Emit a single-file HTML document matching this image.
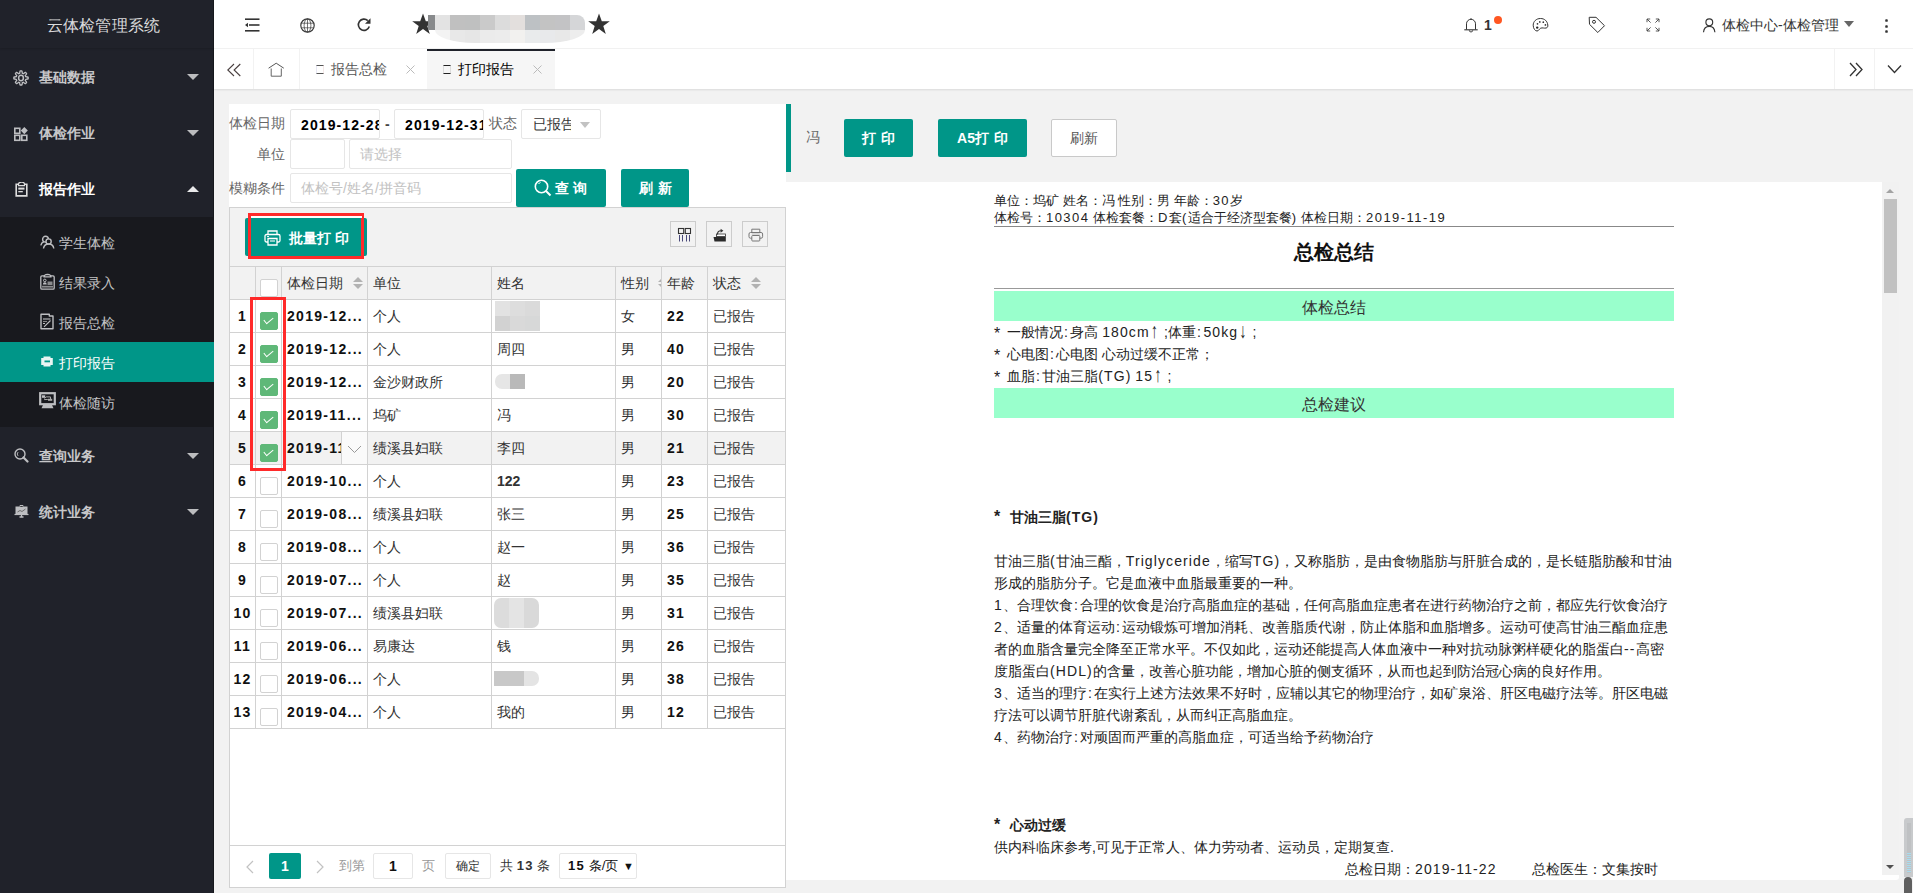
<!DOCTYPE html>
<html><head><meta charset="utf-8">
<style>
*{box-sizing:border-box;margin:0;padding:0}
html,body{width:1913px;height:893px;overflow:hidden}
body{background:#f2f2f2;font-family:"Liberation Sans",sans-serif;font-size:14px;color:#333;position:relative}
.abs{position:absolute}
/* sidebar */
#side{left:0;top:0;width:214px;height:893px;background:#20222a}
#logo{left:0;top:0;width:214px;height:48px;line-height:51px;text-align:center;color:rgba(255,255,255,.85);font-size:16px;padding-right:7px;letter-spacing:0.2px;box-shadow:0 1px 2px rgba(0,0,0,.15)}
.mi{left:0;width:214px;height:56px;color:rgba(255,255,255,.75);font-size:14px}
.mi .t{position:absolute;left:39px;top:1px;line-height:56px;font-weight:bold}
.mi .ic{position:absolute;left:13px;top:20px;width:16px;height:16px}
.mi .ar{position:absolute;left:187px;top:26px;width:0;height:0;border-left:6px solid transparent;border-right:6px solid transparent;border-top:6px solid rgba(255,255,255,.7)}
.mi .ar.up{border-top:0;border-bottom:6px solid rgba(255,255,255,.9)}
#sub{left:0;top:217px;width:214px;height:210px;background:#18191e}
.si{left:0;width:214px;height:40px;color:rgba(255,255,255,.75);font-size:14px}
.si .t{position:absolute;left:59px;top:1px;line-height:40px}
.si .ic{position:absolute;left:40px;top:13px;width:15px;height:15px}
.si.on{background:#009688;color:#fff}
/* header */
#hdr{left:214px;top:0;width:1699px;height:49px;background:#fff;border-bottom:1px solid #f2f2f2}
#tabs{left:214px;top:49px;width:1699px;height:40px;background:#fff;box-shadow:0 1px 2px rgba(0,0,0,.1)}
.tb{position:absolute;top:0;height:40px;border-left:1px solid #f2f2f2}

#lp{left:229px;top:104px;width:557px;height:783px;background:#fff}
.lbl{position:absolute;font-size:14px;color:#666;line-height:18px}
.inp{position:absolute;background:#fff;border:1px solid #e6e6e6;border-radius:2px;overflow:hidden;white-space:nowrap}
.dt{font-weight:bold;color:#000;font-size:14px;line-height:31px;padding-left:10px;letter-spacing:1.1px}
.ph{color:#c2c2c2;font-size:14px;line-height:28px;padding-left:10px}
.btn{position:absolute;background:#009688;color:#fff;border-radius:2px;text-align:center;font-weight:bold;font-size:14px}
#tbl{left:229px;top:207px;width:557px;height:681px;border:1px solid #d2d2d2;background:#fff}
#tool{left:0;top:0;width:555px;height:59px;background:#f2f2f2;border-bottom:1px solid #d2d2d2}
.ibtn{position:absolute;top:13px;width:26px;height:26px;border:1px solid #ccc}
.tr{position:absolute;left:0;width:555px;height:33px;border-bottom:1px solid #d2d2d2}
.tr.h{background:#f2f2f2}
.td{position:absolute;top:0;height:32px;line-height:32px;white-space:nowrap;overflow:hidden;border-right:1px solid #d2d2d2;padding-left:5px;font-size:14px;color:#333}
.tr .td.b{font-weight:bold;color:#111;letter-spacing:1.3px}
.cb{position:absolute;left:30px;width:18px;height:18px;border:1px solid #d2d2d2;border-radius:2px;background:#fff}
.cb.on{background:#5fb878;border-color:#5fb878}
.cb.on:after{content:"";position:absolute;left:3px;top:3.5px;width:8px;height:4px;border-left:1.5px solid #fff;border-bottom:1.5px solid #fff;transform:rotate(-40deg)}
.wb{letter-spacing:1.3px}
.blur{position:absolute;display:flex;flex-wrap:wrap}
.blur i{display:block;width:15px;height:15px}

#rp{left:786px;top:182px;width:1096px;height:698px;background:#fff;overflow:hidden}
.rep{position:absolute;left:208px;width:680px;font-size:14px;color:#222}
.ln{position:absolute;left:0;white-space:nowrap;line-height:22px}
.gb{position:absolute;left:0;width:680px;height:30px;background:#99ffcc;text-align:center;line-height:33px;font-size:16px;color:#333}
.lt{letter-spacing:1.1px}
.h2 .lt{letter-spacing:1.45px}
.ast{display:inline-block;width:9px;font-size:16px;vertical-align:top;position:relative;top:2px}
.co{letter-spacing:2.5px;padding-left:1px}
.ar2{display:inline-block;transform:scaleY(1.5);transform-origin:50% 60%}
</style></head><body>

<div id="side" class="abs">
  <div class="abs" style="left:213px;top:0;width:1px;height:893px;background:#16181d"></div>
  <div id="logo" class="abs">云体检管理系统</div>
  <div class="mi abs" style="top:48px"><svg class="abs" style="left:13px;top:22px" width="16" height="16" viewBox="0 0 16 16"><path d="M8.00 0.85 L8.28 0.86 L8.56 0.87 L8.84 0.90 L9.03 1.48 L9.17 2.12 L9.26 2.75 L9.32 3.33 L9.50 3.39 L9.68 3.45 L9.86 3.52 L10.03 3.60 L10.20 3.68 L10.37 3.77 L10.82 3.40 L11.33 3.01 L11.88 2.66 L12.43 2.39 L12.64 2.56 L12.85 2.75 L13.06 2.94 L13.25 3.15 L13.44 3.36 L13.61 3.57 L13.34 4.12 L12.99 4.67 L12.60 5.18 L12.23 5.63 L12.32 5.80 L12.40 5.97 L12.48 6.14 L12.55 6.32 L12.61 6.50 L12.67 6.68 L13.25 6.74 L13.88 6.83 L14.52 6.97 L15.10 7.16 L15.13 7.44 L15.14 7.72 L15.15 8.00 L15.14 8.28 L15.13 8.56 L15.10 8.84 L14.52 9.03 L13.88 9.17 L13.25 9.26 L12.67 9.32 L12.61 9.50 L12.55 9.68 L12.48 9.86 L12.40 10.03 L12.32 10.20 L12.23 10.37 L12.60 10.82 L12.99 11.33 L13.34 11.88 L13.61 12.43 L13.44 12.64 L13.25 12.85 L13.06 13.06 L12.85 13.25 L12.64 13.44 L12.43 13.61 L11.88 13.34 L11.33 12.99 L10.82 12.60 L10.37 12.23 L10.20 12.32 L10.03 12.40 L9.86 12.48 L9.68 12.55 L9.50 12.61 L9.32 12.67 L9.26 13.25 L9.17 13.88 L9.03 14.52 L8.84 15.10 L8.56 15.13 L8.28 15.14 L8.00 15.15 L7.72 15.14 L7.44 15.13 L7.16 15.10 L6.97 14.52 L6.83 13.88 L6.74 13.25 L6.68 12.67 L6.50 12.61 L6.32 12.55 L6.14 12.48 L5.97 12.40 L5.80 12.32 L5.63 12.23 L5.18 12.60 L4.67 12.99 L4.12 13.34 L3.57 13.61 L3.36 13.44 L3.15 13.25 L2.94 13.06 L2.75 12.85 L2.56 12.64 L2.39 12.43 L2.66 11.88 L3.01 11.33 L3.40 10.82 L3.77 10.37 L3.68 10.20 L3.60 10.03 L3.52 9.86 L3.45 9.68 L3.39 9.50 L3.33 9.32 L2.75 9.26 L2.12 9.17 L1.48 9.03 L0.90 8.84 L0.87 8.56 L0.86 8.28 L0.85 8.00 L0.86 7.72 L0.87 7.44 L0.90 7.16 L1.48 6.97 L2.12 6.83 L2.75 6.74 L3.33 6.68 L3.39 6.50 L3.45 6.32 L3.52 6.14 L3.60 5.97 L3.68 5.80 L3.77 5.63 L3.40 5.18 L3.01 4.67 L2.66 4.12 L2.39 3.57 L2.56 3.36 L2.75 3.15 L2.94 2.94 L3.15 2.75 L3.36 2.56 L3.57 2.39 L4.12 2.66 L4.67 3.01 L5.18 3.40 L5.63 3.77 L5.80 3.68 L5.97 3.60 L6.14 3.52 L6.32 3.45 L6.50 3.39 L6.68 3.33 L6.74 2.75 L6.83 2.12 L6.97 1.48 L7.16 0.90 L7.44 0.87 L7.72 0.86Z" fill="none" stroke="#bdbec1" stroke-width="1.35" stroke-linejoin="round"/><ellipse cx="8" cy="8" rx="2.4" ry="2.7" fill="none" stroke="#bdbec1" stroke-width="1.5"/></svg><span class="t">基础数据</span><span class="ar"></span></div>
  <div class="mi abs" style="top:104px"><svg class="abs" style="left:14px;top:23px" width="15" height="15" viewBox="0 0 15 15"><g fill="none" stroke="#bdbec1" stroke-width="1.6"><rect x="0.8" y="1.3" width="5" height="5"/><rect x="0.8" y="8.3" width="5" height="5"/><rect x="7.8" y="8.3" width="5" height="5"/></g><path d="M10.3 0L13.8 3.6L10.3 7.2L6.8 3.6Z" fill="#bdbec1"/></svg><span class="t">体检作业</span><span class="ar"></span></div>
  <div class="mi abs" style="top:160px;color:#fff"><svg class="abs" style="left:15px;top:22px" width="13" height="15" viewBox="0 0 13 15"><path d="M3.5 2.2H1.2V13.9H11.8V2.2H9.5" fill="none" stroke="#ddd" stroke-width="1.6"/><path d="M3.5 3.6V2.2A3 2 0 0 1 9.5 2.2V3.6Z" fill="none" stroke="#ddd" stroke-width="1.2"/><rect x="3.3" y="5.6" width="6.2" height="2" fill="#ddd"/><rect x="3.3" y="9" width="4.5" height="1.3" fill="#ddd"/></svg><span class="t">报告作业</span><span class="ar up"></span></div>
  <div id="sub" class="abs">
    <div class="si abs" style="top:5px"><svg class="abs" style="left:40px;top:13px" width="15" height="15" viewBox="0 0 15 15"><g fill="none" stroke="#bdbec1" stroke-width="1.4"><circle cx="5.5" cy="4.2" r="2.9"/><path d="M0.8 10.3A4.8 4.8 0 0 1 4 6.7"/><circle cx="8.6" cy="6.5" r="2.6" fill="#18191e"/><path d="M3.5 13.5A5.2 5.2 0 0 1 13.8 13.5"/></g></svg><span class="t">学生体检</span></div>
    <div class="si abs" style="top:45px"><svg class="abs" style="left:40px;top:11px" width="15" height="17" viewBox="0 0 15 17"><path d="M4 2.8H2A1.3 1.3 0 0 0 0.8 4.1V14.9A1.3 1.3 0 0 0 2 16.2H13A1.3 1.3 0 0 0 14.2 14.9V4.1A1.3 1.3 0 0 0 13 2.8H11" fill="none" stroke="#bdbec1" stroke-width="1.3"/><path d="M4 3.8Q4 1.8 7.5 1.4Q11 1.8 11 3.8Z" fill="none" stroke="#bdbec1" stroke-width="1.2"/><circle cx="4.8" cy="7.4" r="1.3" fill="none" stroke="#bdbec1" stroke-width="1"/><path d="M2.8 11.5A2 2.2 0 0 1 6.8 11.5Z" fill="#bdbec1"/><rect x="7.5" y="8.5" width="5" height="3.5" fill="#8a8b8e"/><rect x="2" y="12.8" width="11" height="1.8" fill="#8a8b8e"/></svg><span class="t">结果录入</span></div>
    <div class="si abs" style="top:85px"><svg class="abs" style="left:40px;top:11px" width="14" height="17" viewBox="0 0 14 17"><path d="M1 1.2H9.3V3H13V15.8H1Z" fill="none" stroke="#bdbec1" stroke-width="1.4" stroke-linejoin="round"/><path d="M3 6H10.5" stroke="#bdbec1" stroke-width="1.1"/><path d="M3 8.5H7" stroke="#888" stroke-width="1.1"/><path d="M3 10.5H5" stroke="#bdbec1" stroke-width="1"/><path d="M4 13.8L10.5 7.5" stroke="#bdbec1" stroke-width="1.1"/></svg><span class="t">报告总检</span></div>
    <div class="si abs on" style="top:125px"><svg class="abs" style="left:41px;top:14px" width="12" height="11" viewBox="0 0 12 11"><path d="M2.5 0.5H9.5V2H11.8V9H9.5V10.5H2.5V9H0.2V2H2.5Z" fill="#e8f5f3"/><rect x="3.5" y="4.5" width="5.5" height="1.8" fill="#009688"/></svg><span class="t">打印报告</span></div>
    <div class="si abs" style="top:165px"><svg class="abs" style="left:39px;top:10px" width="17" height="17" viewBox="0 0 17 17"><rect x="1.2" y="1.2" width="14.6" height="11" fill="none" stroke="#bdbec1" stroke-width="2.2"/><path d="M4 13H13L14.5 16.2H2.5Z" fill="#bdbec1"/><rect x="3" y="3.3" width="3.2" height="2.5" fill="#bdbec1"/><path d="M5.5 6.5L7.2 4.9H11.5V7.5H8.5L5.2 7.6" fill="none" stroke="#aaa" stroke-width="1"/><rect x="9" y="6.8" width="4.2" height="2" fill="#aaa"/></svg><span class="t">体检随访</span></div>
  </div>
  <div class="mi abs" style="top:427px"><svg class="abs" style="left:14px;top:21px" width="15" height="15" viewBox="0 0 15 15"><circle cx="6" cy="6" r="5" fill="none" stroke="#bdbec1" stroke-width="1.4"/><path d="M9.5 9.5L13.5 13.5" stroke="#bdbec1" stroke-width="2.2" stroke-linecap="round"/><path d="M4.3 4A2.5 2.5 0 0 0 4.3 8" fill="none" stroke="#bdbec1" stroke-width="0.9"/></svg><span class="t">查询业务</span><span class="ar"></span></div>
  <div class="mi abs" style="top:483px"><svg class="abs" style="left:14px;top:22px" width="15" height="13" viewBox="0 0 15 13"><path d="M1.5 1.5H13.5V9.5H1.5Z" fill="#bdbec1"/><path d="M0.5 9.5H14.5" stroke="#bdbec1" stroke-width="1.2"/><path d="M6 1.5V0.5H9V1.5" stroke="#bdbec1" stroke-width="1"/><path d="M7.5 10V11.5M5.5 12H9.5" stroke="#bdbec1" stroke-width="1.3"/><path d="M3.5 7L6 5.5L8 6.5L11.5 4" fill="none" stroke="#555" stroke-width="0.8"/></svg><span class="t">统计业务</span><span class="ar"></span></div>
</div>

<div id="hdr" class="abs">
  <!-- menu icon -->
  <svg class="abs" style="left:30px;top:18px" width="16" height="14" viewBox="0 0 16 14"><g stroke="#333" stroke-width="1.6"><path d="M1 1.2H15.5"/><path d="M5 7H15.5"/><path d="M1 12.8H15.5"/></g><path d="M1 7L4 4.8V9.2Z" fill="#333"/></svg>
  <!-- globe -->
  <svg class="abs" style="left:86px;top:18px" width="15" height="15" viewBox="0 0 15 15"><g fill="none" stroke="#3a3a3a"><circle cx="7.5" cy="7.5" r="6.7" stroke-width="1.2"/><ellipse cx="7.5" cy="7.5" rx="3.4" ry="6.6" stroke-width="0.7"/><path d="M7.5 1V14M1.5 5.2H13.5M1.5 9.8H13.5" stroke-width="0.7"/></g></svg>
  <!-- refresh -->
  <svg class="abs" style="left:142px;top:17px" width="16" height="16" viewBox="0 0 16 16"><path d="M13.3 9.5A5.6 5.6 0 1 1 11.8 3.6" fill="none" stroke="#333" stroke-width="1.6"/><path d="M14.5 1.2V6.8H9Z" fill="#333"/></svg>
  <!-- stars & blurred title -->
  <svg class="abs" style="left:198px;top:13px" width="24" height="23" viewBox="0 0 24 23"><path d="M11 0.5L13.8 8.2H21.8L15.3 13L17.8 21L11 16.1L4.2 21L6.7 13L0.2 8.2H8.2Z" fill="#333"/></svg>
  <div class="abs" style="left:214px;top:15px;width:157px;height:15px;border-radius:0 8px 0 0;overflow:hidden;display:flex">
    <div style="width:7px;background:#888a8c"></div><div style="width:15px;background:#e3e3e3"></div><div style="width:15px;background:#c0c0c0"></div><div style="width:15px;background:#bfc0c0"></div><div style="width:15px;background:#cacaca"></div><div style="width:15px;background:#dcdcdc"></div><div style="width:15px;background:#e3dfdd"></div><div style="width:15px;background:#bdc1c4"></div><div style="width:15px;background:#c3c3c3"></div><div style="width:15px;background:#c3c3c5"></div><div style="width:15px;background:#d5d6d8"></div>
  </div>
  <div class="abs" style="left:221px;top:30px;width:150px;height:13px;border-radius:0 0 40px 40px/0 0 13px 13px;overflow:hidden;display:flex">
    <div style="width:15px;background:#f3f3f3"></div><div style="width:15px;background:#e8e8e8"></div><div style="width:15px;background:#e6e6e6"></div><div style="width:15px;background:#ebebeb"></div><div style="width:15px;background:#ececec"></div><div style="width:15px;background:#f2f1ef"></div><div style="width:15px;background:#e9ebec"></div><div style="width:15px;background:#e8e9eb"></div><div style="width:15px;background:#e8e8e8"></div><div style="width:15px;background:#ededed"></div>
  </div>
  <svg class="abs" style="left:374px;top:13px" width="24" height="23" viewBox="0 0 24 23"><path d="M11 0.5L13.8 8.2H21.8L15.3 13L17.8 21L11 16.1L4.2 21L6.7 13L0.2 8.2H8.2Z" fill="#333"/></svg>
  <!-- right icons -->
  <svg class="abs" style="left:1250px;top:17px" width="15" height="16" viewBox="0 0 15 16"><path d="M2.5 12.5V6.8A4.5 4.5 0 0 1 11.5 6.8V12.5" fill="none" stroke="#333" stroke-width="1"/><path d="M0.3 12.8H13.7" stroke="#333" stroke-width="1.1"/><path d="M5.3 13.3A1.7 1.7 0 0 0 8.7 13.3" fill="none" stroke="#333" stroke-width="0.9"/><path d="M7 1.2V2.4" stroke="#333" stroke-width="1"/></svg>
  <div class="abs" style="left:1270px;top:16px;font-weight:bold;font-size:14px;line-height:18px;color:#333">1</div>
  <div class="abs" style="left:1280px;top:16px;width:8px;height:8px;border-radius:50%;background:#ff5722"></div>
  <svg class="abs" style="left:1318px;top:17px" width="17" height="16" viewBox="0 0 17 16"><path d="M8.5 1.5C4.2 1.5 1.2 4.5 1.2 8.2C1.2 11.8 3.3 14 5 14C6.8 14 7 12 8.7 11.2C10.5 10.4 12 11.5 14.2 11C15.6 10.6 16 9.6 15.8 8C15.3 4 12.5 1.5 8.5 1.5Z" fill="none" stroke="#333" stroke-width="1"/><circle cx="5.2" cy="10.6" r="1.2" fill="#222"/><circle cx="5.5" cy="6.8" r="0.85" fill="#333"/><circle cx="7.8" cy="4.9" r="0.85" fill="#333"/><circle cx="11.3" cy="5.2" r="0.85" fill="#333"/><circle cx="13.4" cy="7.9" r="0.85" fill="#333"/></svg>
  <svg class="abs" style="left:1374px;top:16px" width="18" height="18" viewBox="0 0 18 18"><path d="M1.2 1.3H8L16.5 9.7L9.8 16.5L1.5 8.3Z" fill="none" stroke="#333" stroke-width="1" stroke-linejoin="round"/><circle cx="6" cy="5.8" r="1.5" fill="none" stroke="#333" stroke-width="1"/></svg>
  <svg class="abs" style="left:1432px;top:18px" width="14" height="14" viewBox="0 0 14 14"><g stroke="#444" stroke-width="0.9" fill="none"><path d="M1 4.2V1H4.2M1 1L4.6 4.6"/><path d="M9.8 1H13V4.2M13 1L9.4 4.6"/><path d="M1 9.8V13H4.2M1 13L4.6 9.4"/><path d="M13 9.8V13H9.8M13 13L9.4 9.4"/></g></svg>
  <svg class="abs" style="left:1488px;top:18px" width="14" height="15" viewBox="0 0 14 15"><circle cx="7.3" cy="4.3" r="3.4" fill="none" stroke="#333" stroke-width="1.15"/><path d="M1.5 14.2C1.9 10.4 4 8.4 7.3 8.4S12.5 10.4 12.9 14.2" fill="none" stroke="#333" stroke-width="1.15"/></svg>
  <div class="abs" style="left:1508px;top:16px;line-height:18px;font-size:14px;color:#333">体检中心-体检管理</div>
  <div class="abs" style="left:1630px;top:21px;width:0;height:0;border-left:5.5px solid transparent;border-right:5.5px solid transparent;border-top:6px solid #666"></div>
  <div class="abs" style="left:1671px;top:19px;width:3px">
    <div style="width:3px;height:3px;background:#333;border-radius:1px;margin-bottom:2.5px;transform:scale(.85)"></div>
    <div style="width:3px;height:3px;background:#333;border-radius:1px;margin-bottom:2.5px;transform:scale(.85)"></div>
    <div style="width:3px;height:3px;background:#333;border-radius:1px;transform:scale(.85)"></div>
  </div>
</div>
<div id="tabs" class="abs">
  <div class="tb" style="left:0;width:40px;border-left:0;border-right:1px solid #f2f2f2">
    <svg class="abs" style="left:12.5px;top:14px" width="15" height="15" viewBox="0 0 15 15"><path d="M7 1L0.8 7L7 13M13.3 1L7.1 7L13.3 13" fill="none" stroke="#4a4040" stroke-width="1.1"/></svg>
  </div>
  <div class="tb" style="left:40px;width:46px;border-left:0;border-right:1px solid #f2f2f2">
    <svg class="abs" style="left:14px;top:13px" width="18" height="16" viewBox="0 0 18 16"><path d="M0.6 6.2L8.2 1.2L15.8 6.2" fill="none" stroke="#555" stroke-width="1"/><path d="M3.2 6.5V14.2H13.3V6.5" fill="none" stroke="#666" stroke-width="1"/></svg>
  </div>
  <div class="tb" style="left:86px;width:127px;border-left:0">
    <div class="abs" style="left:16px;top:16px;width:8px;height:9px;border-top:1px solid #555;border-bottom:1px solid #555;border-left:1px solid #e8e8f4;border-right:1px solid #f4e8e8"></div>
    <div class="abs" style="left:31px;top:0;line-height:40px;color:#555">报告总检</div>
    <svg class="abs" style="left:106px;top:16px" width="9" height="9" viewBox="0 0 9 9"><path d="M0.5 0.5L8.5 8.5M8.5 0.5L0.5 8.5" stroke="#bbb" stroke-width="1"/></svg>
  </div>
  <div class="tb" style="left:213px;width:128px;border-left:0;background:#f6f6f6">
    <div class="abs" style="left:0;top:0;width:128px;height:2px;background:#1f222a"></div>
    <div class="abs" style="left:16px;top:16px;width:8px;height:9px;border-top:1px solid #222;border-bottom:1px solid #222;border-left:1px solid #ddd;border-right:1px solid #ddd"></div>
    <div class="abs" style="left:31px;top:0;line-height:40px;color:#000">打印报告</div>
    <svg class="abs" style="left:106px;top:16px" width="9" height="9" viewBox="0 0 9 9"><path d="M0.5 0.5L8.5 8.5M8.5 0.5L0.5 8.5" stroke="#bbb" stroke-width="1"/></svg>
  </div>
  <div class="tb" style="left:1620px;width:40px;border-left:1px solid #f2f2f2">
    <svg class="abs" style="left:13px;top:13px" width="15" height="15" viewBox="0 0 15 15"><path d="M2 1L8 7.5L2 14M8 1L14 7.5L8 14" fill="none" stroke="#333" stroke-width="1.3"/></svg>
  </div>
  <div class="tb" style="left:1660px;width:39px;border-left:1px solid #f2f2f2">
    <svg class="abs" style="left:12px;top:15px" width="15" height="10" viewBox="0 0 15 10"><path d="M1 1.5L7.5 8.5L14 1.5" fill="none" stroke="#333" stroke-width="1.3"/></svg>
  </div>
</div>

<div id="lp" class="abs">
  <div class="lbl" style="left:0;top:10px">体检日期</div>
  <div class="inp" style="left:61px;top:5px;width:90px;height:30px"><div class="dt">2019-12-28</div></div>
  <div class="lbl" style="left:156px;top:11px;color:#444;font-weight:bold">-</div>
  <div class="inp" style="left:165px;top:5px;width:90px;height:30px"><div class="dt">2019-12-31</div></div>
  <div class="lbl" style="left:260px;top:10px">状态</div>
  <div class="inp" style="left:292px;top:5px;width:80px;height:30px"><div class="abs" style="left:11px;top:0;width:38px;overflow:hidden;line-height:29px;color:#333">已报告</div>
    <div class="abs" style="left:58px;top:12px;width:0;height:0;border-left:5.5px solid transparent;border-right:5.5px solid transparent;border-top:6px solid #c2c2c2"></div></div>
  <div class="lbl" style="left:28px;top:41px">单位</div>
  <div class="inp" style="left:61px;top:35px;width:55px;height:30px"></div>
  <div class="inp" style="left:120px;top:35px;width:163px;height:30px"><div class="ph">请选择</div></div>
  <div class="lbl" style="left:0;top:75px">模糊条件</div>
  <div class="inp" style="left:61px;top:69px;width:222px;height:30px"><div class="ph">体检号/姓名/拼音码</div></div>
  <div class="btn" style="left:287px;top:65px;width:90px;height:38px;line-height:38px">
    <svg class="abs" style="left:18px;top:10px" width="18" height="18" viewBox="0 0 18 18"><circle cx="7.5" cy="7.5" r="6.2" fill="none" stroke="#fff" stroke-width="1.6"/><path d="M12 12L16.5 16.5" stroke="#fff" stroke-width="2"/><path d="M4.5 5A3.5 3.5 0 0 1 6.5 3.5" fill="none" stroke="#fff" stroke-width="1"/></svg>
    <span class="abs" style="left:39px;top:0;letter-spacing:4px">查询</span></div>
  <div class="btn" style="left:392px;top:65px;width:68px;height:38px;line-height:38px;letter-spacing:5px;padding-left:5px">刷新</div>
</div>
<div id="tbl" class="abs">
  <div id="tool" class="abs">
    <div class="btn" style="left:15px;top:10px;width:122px;height:38px;line-height:38px">
      <svg class="abs" style="left:19px;top:12px" width="17" height="16" viewBox="0 0 17 16"><path d="M4 4.5V1H13V4.5" fill="none" stroke="#fff" stroke-width="1.3"/><path d="M4 12H2.5A1.5 1.5 0 0 1 1 10.5V6A1.5 1.5 0 0 1 2.5 4.5H14.5A1.5 1.5 0 0 1 16 6V10.5A1.5 1.5 0 0 1 14.5 12H13" fill="none" stroke="#fff" stroke-width="1.3"/><path d="M4 8.5H13V15H4Z" fill="none" stroke="#fff" stroke-width="1.3"/><path d="M6 11H11" stroke="#fff" stroke-width="1.1"/><path d="M3 6.5H5" stroke="#fff" stroke-width="0.9"/></svg>
      <span class="abs" style="left:44px;top:1px">批量打 印</span>
    </div>
    <div class="abs" style="left:18px;top:5px;width:116px;height:46px;border:3px solid #ff2a2a"></div>
    <div class="abs" style="left:21px;top:8px;width:111px;height:2px;background:#fff"></div>
    <div class="ibtn" style="left:440px">
      <svg class="abs" style="left:6px;top:5px" width="15" height="16" viewBox="0 0 15 16"><g fill="none" stroke="#333" stroke-width="1.1"><rect x="1.5" y="1.5" width="5.2" height="5"/><rect x="8.3" y="1.5" width="5.2" height="5"/></g><g stroke="#4a4a7a" stroke-width="1"><path d="M2.5 8V14.5M5.5 8V14.5M9.5 8V14.5M12.5 8V14.5"/></g></svg></div>
    <div class="ibtn" style="left:476px">
      <svg class="abs" style="left:6px;top:6px" width="14" height="15" viewBox="0 0 14 15"><path d="M3 8.2H12.5V7.5" fill="none" stroke="#333" stroke-width="1"/><rect x="3.5" y="6" width="9" height="2.5" fill="#fff" stroke="#333" stroke-width="0.8"/><path d="M0.5 9H12.8V13.6H1.5Z" fill="#2a2a2a"/><path d="M4.5 6.5C4.5 4 5.5 2.8 8 2.8" fill="none" stroke="#333" stroke-width="1.1"/><path d="M7.6 0.8L10.4 2.8L7.6 4.8Z" fill="#333"/></svg></div>
    <div class="ibtn" style="left:512px">
      <svg class="abs" style="left:5px;top:5px" width="16" height="16" viewBox="0 0 16 16"><g fill="none" stroke="#777" stroke-width="1"><path d="M3.8 5.5V2.2H11.8V5.5"/><path d="M3.8 11.2H2.5A1.5 1.5 0 0 1 1 9.7V7A1.5 1.5 0 0 1 2.5 5.5H13.1A1.5 1.5 0 0 1 14.6 7V9.7A1.5 1.5 0 0 1 13.1 11.2H11.8"/><rect x="3.8" y="8.5" width="8" height="5.5" rx="0.8"/></g><path d="M3.8 7H11.8" stroke="#bbb" stroke-width="1"/></svg></div>
  </div>
  <div class="tr h" style="top:59px">
    <div class="td" style="left:0;width:26px"></div>
    <div class="td" style="left:26px;width:26px;padding:0"><div class="cb" style="left:4px;top:12px"></div></div>
    <div class="td" style="left:52px;width:86px">体检日期<span class="abs" style="left:71px;top:10px;width:0;height:0;border:5px solid transparent;border-bottom-color:#b2b2b2;border-top:0"></span><span class="abs" style="left:71px;top:17px;width:0;height:0;border:5px solid transparent;border-top-color:#b2b2b2;border-bottom:0"></span></div>
    <div class="td" style="left:138px;width:124px">单位</div>
    <div class="td" style="left:262px;width:124px">姓名</div>
    <div class="td" style="left:386px;width:46px">性别<span class="abs" style="left:42px;top:10px;width:0;height:0;border:5px solid transparent;border-bottom-color:#b2b2b2;border-top:0"></span><span class="abs" style="left:42px;top:17px;width:0;height:0;border:5px solid transparent;border-top-color:#b2b2b2;border-bottom:0"></span></div>
    <div class="td" style="left:432px;width:46px">年龄</div>
    <div class="td" style="left:478px;width:77px;border-right:0">状态<span class="abs" style="left:43px;top:10px;width:0;height:0;border:5px solid transparent;border-bottom-color:#b2b2b2;border-top:0"></span><span class="abs" style="left:43px;top:17px;width:0;height:0;border:5px solid transparent;border-top-color:#b2b2b2;border-bottom:0"></span></div>
  </div>
<div class="tr" style="top:92px;"><div class="td b" style="left:0;width:26px;padding:0;text-align:center">1</div><div class="td" style="left:26px;width:26px;padding:0"><div class="cb on" style="left:4px;top:12px"></div></div><div class="td b" style="left:52px;width:86px">2019-12...</div><div class="td" style="left:138px;width:124px">个人</div><div class="td" style="left:262px;width:124px"></div><div class="td" style="left:386px;width:46px">女</div><div class="td b" style="left:432px;width:46px">22</div><div class="td" style="left:478px;width:77px;border-right:0">已报告</div></div>
<div class="tr" style="top:125px;"><div class="td b" style="left:0;width:26px;padding:0;text-align:center">2</div><div class="td" style="left:26px;width:26px;padding:0"><div class="cb on" style="left:4px;top:12px"></div></div><div class="td b" style="left:52px;width:86px">2019-12...</div><div class="td" style="left:138px;width:124px">个人</div><div class="td" style="left:262px;width:124px">周四</div><div class="td" style="left:386px;width:46px">男</div><div class="td b" style="left:432px;width:46px">40</div><div class="td" style="left:478px;width:77px;border-right:0">已报告</div></div>
<div class="tr" style="top:158px;"><div class="td b" style="left:0;width:26px;padding:0;text-align:center">3</div><div class="td" style="left:26px;width:26px;padding:0"><div class="cb on" style="left:4px;top:12px"></div></div><div class="td b" style="left:52px;width:86px">2019-12...</div><div class="td" style="left:138px;width:124px">金沙财政所</div><div class="td" style="left:262px;width:124px"></div><div class="td" style="left:386px;width:46px">男</div><div class="td b" style="left:432px;width:46px">20</div><div class="td" style="left:478px;width:77px;border-right:0">已报告</div></div>
<div class="tr" style="top:191px;"><div class="td b" style="left:0;width:26px;padding:0;text-align:center">4</div><div class="td" style="left:26px;width:26px;padding:0"><div class="cb on" style="left:4px;top:12px"></div></div><div class="td b" style="left:52px;width:86px">2019-11...</div><div class="td" style="left:138px;width:124px">坞矿</div><div class="td" style="left:262px;width:124px">冯</div><div class="td" style="left:386px;width:46px">男</div><div class="td b" style="left:432px;width:46px">30</div><div class="td" style="left:478px;width:77px;border-right:0">已报告</div></div>
<div class="tr" style="top:224px;background:#f2f2f2;"><div class="td b" style="left:0;width:26px;padding:0;text-align:center">5</div><div class="td" style="left:26px;width:26px;padding:0"><div class="cb on" style="left:4px;top:12px"></div></div><div class="td b" style="left:52px;width:86px">2019-11</div><div class="td" style="left:138px;width:124px">绩溪县妇联</div><div class="td" style="left:262px;width:124px">李四</div><div class="td" style="left:386px;width:46px">男</div><div class="td b" style="left:432px;width:46px">21</div><div class="td" style="left:478px;width:77px;border-right:0">已报告</div></div>
<div class="tr" style="top:257px;"><div class="td b" style="left:0;width:26px;padding:0;text-align:center">6</div><div class="td" style="left:26px;width:26px;padding:0"><div class="cb" style="left:4px;top:12px"></div></div><div class="td b" style="left:52px;width:86px">2019-10...</div><div class="td" style="left:138px;width:124px">个人</div><div class="td" style="left:262px;width:124px"><b>122</b></div><div class="td" style="left:386px;width:46px">男</div><div class="td b" style="left:432px;width:46px">23</div><div class="td" style="left:478px;width:77px;border-right:0">已报告</div></div>
<div class="tr" style="top:290px;"><div class="td b" style="left:0;width:26px;padding:0;text-align:center">7</div><div class="td" style="left:26px;width:26px;padding:0"><div class="cb" style="left:4px;top:12px"></div></div><div class="td b" style="left:52px;width:86px">2019-08...</div><div class="td" style="left:138px;width:124px">绩溪县妇联</div><div class="td" style="left:262px;width:124px">张三</div><div class="td" style="left:386px;width:46px">男</div><div class="td b" style="left:432px;width:46px">25</div><div class="td" style="left:478px;width:77px;border-right:0">已报告</div></div>
<div class="tr" style="top:323px;"><div class="td b" style="left:0;width:26px;padding:0;text-align:center">8</div><div class="td" style="left:26px;width:26px;padding:0"><div class="cb" style="left:4px;top:12px"></div></div><div class="td b" style="left:52px;width:86px">2019-08...</div><div class="td" style="left:138px;width:124px">个人</div><div class="td" style="left:262px;width:124px">赵一</div><div class="td" style="left:386px;width:46px">男</div><div class="td b" style="left:432px;width:46px">36</div><div class="td" style="left:478px;width:77px;border-right:0">已报告</div></div>
<div class="tr" style="top:356px;"><div class="td b" style="left:0;width:26px;padding:0;text-align:center">9</div><div class="td" style="left:26px;width:26px;padding:0"><div class="cb" style="left:4px;top:12px"></div></div><div class="td b" style="left:52px;width:86px">2019-07...</div><div class="td" style="left:138px;width:124px">个人</div><div class="td" style="left:262px;width:124px">赵</div><div class="td" style="left:386px;width:46px">男</div><div class="td b" style="left:432px;width:46px">35</div><div class="td" style="left:478px;width:77px;border-right:0">已报告</div></div>
<div class="tr" style="top:389px;"><div class="td b" style="left:0;width:26px;padding:0;text-align:center">10</div><div class="td" style="left:26px;width:26px;padding:0"><div class="cb" style="left:4px;top:12px"></div></div><div class="td b" style="left:52px;width:86px">2019-07...</div><div class="td" style="left:138px;width:124px">绩溪县妇联</div><div class="td" style="left:262px;width:124px"></div><div class="td" style="left:386px;width:46px">男</div><div class="td b" style="left:432px;width:46px">31</div><div class="td" style="left:478px;width:77px;border-right:0">已报告</div></div>
<div class="tr" style="top:422px;"><div class="td b" style="left:0;width:26px;padding:0;text-align:center">11</div><div class="td" style="left:26px;width:26px;padding:0"><div class="cb" style="left:4px;top:12px"></div></div><div class="td b" style="left:52px;width:86px">2019-06...</div><div class="td" style="left:138px;width:124px">易康达</div><div class="td" style="left:262px;width:124px">钱</div><div class="td" style="left:386px;width:46px">男</div><div class="td b" style="left:432px;width:46px">26</div><div class="td" style="left:478px;width:77px;border-right:0">已报告</div></div>
<div class="tr" style="top:455px;"><div class="td b" style="left:0;width:26px;padding:0;text-align:center">12</div><div class="td" style="left:26px;width:26px;padding:0"><div class="cb" style="left:4px;top:12px"></div></div><div class="td b" style="left:52px;width:86px">2019-06...</div><div class="td" style="left:138px;width:124px">个人</div><div class="td" style="left:262px;width:124px"></div><div class="td" style="left:386px;width:46px">男</div><div class="td b" style="left:432px;width:46px">38</div><div class="td" style="left:478px;width:77px;border-right:0">已报告</div></div>
<div class="tr" style="top:488px;"><div class="td b" style="left:0;width:26px;padding:0;text-align:center">13</div><div class="td" style="left:26px;width:26px;padding:0"><div class="cb" style="left:4px;top:12px"></div></div><div class="td b" style="left:52px;width:86px">2019-04...</div><div class="td" style="left:138px;width:124px">个人</div><div class="td" style="left:262px;width:124px">我的</div><div class="td" style="left:386px;width:46px">男</div><div class="td b" style="left:432px;width:46px">12</div><div class="td" style="left:478px;width:77px;border-right:0">已报告</div></div>

  <!-- red box around checkboxes -->
  <div class="abs" style="left:20px;top:89px;width:36px;height:174px;border:3px solid #ff2a2a"></div>
  <!-- row5 expand -->
  <div class="abs" style="left:111px;top:224px;width:26px;height:32px;background:#fafafa;border-left:1px solid #d2d2d2">
    <svg class="abs" style="left:5px;top:13px" width="15" height="9" viewBox="0 0 15 9"><path d="M1 1L7.5 7.5L14 1" fill="none" stroke="#999" stroke-width="1"/></svg>
  </div>
  <!-- blurred names -->
  <div class="blur" style="left:265px;top:93px;width:45px"><i style="background:#e2e2e2"></i><i style="background:#dddddd"></i><i style="background:#dadada"></i><i style="background:#d2d2d2"></i><i style="background:#d9d9d9"></i><i style="background:#d7d8d8"></i></div>
  <div class="blur" style="left:265px;top:166px;width:30px"><i style="background:#e6e6e6;height:15px;border-radius:7px 0 0 7px"></i><i style="background:#b9b9b9"></i></div>
  <div class="blur" style="left:264px;top:390px;width:45px"><i style="background:#dcdcdc;height:30px;border-radius:7px 0 0 7px"></i><i style="background:#e4e4e4;height:30px"></i><i style="background:#d9d9d9;height:30px;border-radius:0 7px 7px 0"></i></div>
  <div class="blur" style="left:264px;top:463px;width:45px"><i style="background:#c8c8c8;width:30px"></i><i style="background:#e4e4e4;border-radius:0 7px 7px 0"></i></div>
  <div class="abs" style="left:0;top:637px;width:555px;height:42px;border-top:1px solid #d2d2d2">
    <svg class="abs" style="left:16px;top:14px" width="8" height="14" viewBox="0 0 8 14"><path d="M7 1L1 7L7 13" fill="none" stroke="#c2c2c2" stroke-width="1.2"/></svg>
    <div class="abs" style="left:39px;top:7px;width:32px;height:26px;background:#009688;border-radius:2px;color:#fff;font-weight:bold;text-align:center;line-height:26px">1</div>
    <svg class="abs" style="left:86px;top:14px" width="8" height="14" viewBox="0 0 8 14"><path d="M1 1L7 7L1 13" fill="none" stroke="#c2c2c2" stroke-width="1.2"/></svg>
    <div class="abs" style="left:109px;top:11px;line-height:18px;color:#999;font-size:13px">到第</div>
    <div class="abs" style="left:143px;top:7px;width:40px;height:26px;border:1px solid #e6e6e6;border-radius:2px;text-align:center;line-height:24px;font-weight:bold;color:#111">1</div>
    <div class="abs" style="left:192px;top:11px;line-height:18px;color:#999;font-size:13px">页</div>
    <div class="abs" style="left:215px;top:7px;width:46px;height:26px;border:1px solid #e6e6e6;border-radius:2px;text-align:center;line-height:24px;font-size:12px;color:#333">确定</div>
    <div class="abs" style="left:270px;top:11px;line-height:18px;color:#333;font-size:13px">共 <b class="wb">13</b> 条</div>
    <div class="abs" style="left:329px;top:7px;width:78px;height:26px;border:1px solid #e6e6e6;border-radius:2px;line-height:24px;font-size:13px;color:#111;padding-left:8px"><b class="wb">15</b> 条/页<span class="abs" style="left:63px;top:0;font-size:11px">▼</span></div>
  </div>
</div>
<div class="abs" style="left:786px;top:104px;width:5px;height:68px;background:#009688"></div>
<div class="abs" style="left:806px;top:128px;line-height:18px;color:#666">冯</div>
<div class="btn" style="left:844px;top:119px;width:69px;height:38px;line-height:38px;letter-spacing:5px;padding-left:5px;font-weight:bold">打印</div>
<div class="btn" style="left:938px;top:119px;width:89px;height:38px;line-height:38px;font-weight:bold"><span class="wb" style="letter-spacing:0">A5</span>打<span style="margin-left:5px">印</span></div>
<div class="abs" style="left:1051px;top:119px;width:66px;height:38px;line-height:36px;background:#fff;border:1px solid #c9c9c9;border-radius:2px;text-align:center;color:#555">刷新</div>
<div id="rp" class="abs">
  <div class="rep" style="top:0;height:698px">
    <div class="ln" style="top:10px;line-height:17px;font-size:13px">单位：坞矿 姓名：冯 性别：男 年龄：<span class="lt">30</span>岁</div>
    <div class="ln h2" style="top:27px;line-height:17px;font-size:13px">体检号：<span class="lt">10304</span> 体检套餐：<span class="lt">D</span>套<span class="lt">(</span>适合于经济型套餐<span class="lt">)</span> 体检日期：<span class="lt">2019-11-19</span></div>
    <div class="abs" style="left:0;top:44px;width:680px;height:1px;background:#888"></div>
    <div class="ln" style="top:58px;width:680px;text-align:center;font-size:20px;font-weight:bold;line-height:24px;color:#111">总检总结</div>
    <div class="abs" style="left:0;top:106px;width:680px;height:1px;background:#999"></div>
    <div class="gb" style="top:109px">体检总结</div>
    <div class="ln" style="top:139px"><span class="ast">*</span> 一般情况<span class="co">:</span>身高 <span class="lt">180cm</span><span class="co ar2">↑</span> ;体重<span class="co">:</span><span class="lt">50kg</span><span class="co ar2">↓</span> ;</div>
    <div class="ln" style="top:161px"><span class="ast">*</span> 心电图<span class="co">:</span>心电图 心动过缓不正常；</div>
    <div class="ln" style="top:182.5px"><span class="ast">*</span> 血脂<span class="co">:</span>甘油三脂<span class="lt">(TG)</span> <span class="lt">15</span><span class="co ar2">↑</span> ;</div>
    <div class="gb" style="top:206px">总检建议</div>
    <div class="ln" style="top:324px;font-weight:bold"><span class="ast" style="width:12px;top:0">*</span> 甘油三脂<span class="lt">(TG)</span></div>
    <div class="ln" style="top:368px">甘油三脂<span class="lt">(</span>甘油三酯，<span class="lt">Triglyceride</span>，缩写<span class="lt">TG)</span>，又称脂肪，是由食物脂肪与肝脏合成的，是长链脂肪酸和甘油</div>
    <div class="ln" style="top:390px">形成的脂肪分子。它是血液中血脂最重要的一种。</div>
    <div class="ln" style="top:412px"><span class="lt">1</span>、合理饮食<span class="co">:</span>合理的饮食是治疗高脂血症的基础，任何高脂血症患者在进行药物治疗之前，都应先行饮食治疗</div>
    <div class="ln" style="top:434px"><span class="lt">2</span>、适量的体育运动<span class="co">:</span>运动锻炼可增加消耗、改善脂质代谢，防止体脂和血脂增多。运动可使高甘油三酯血症患</div>
    <div class="ln" style="top:456px">者的血脂含量完全降至正常水平。不仅如此，运动还能提高人体血液中一种对抗动脉粥样硬化的脂蛋白<span class="lt">--</span>高密</div>
    <div class="ln" style="top:478px">度脂蛋白<span class="lt">(HDL)</span>的含量，改善心脏功能，增加心脏的侧支循环，从而也起到防治冠心病的良好作用。</div>
    <div class="ln" style="top:500px"><span class="lt">3</span>、适当的理疗<span class="co">:</span>在实行上述方法效果不好时，应辅以其它的物理治疗，如矿泉浴、肝区电磁疗法等。肝区电磁</div>
    <div class="ln" style="top:522px">疗法可以调节肝脏代谢紊乱，从而纠正高脂血症。</div>
    <div class="ln" style="top:544px"><span class="lt">4</span>、药物治疗<span class="co">:</span>对顽固而严重的高脂血症，可适当给予药物治疗</div>
    <div class="ln" style="top:632px;font-weight:bold"><span class="ast" style="width:12px;top:0">*</span> 心动过缓</div>
    <div class="ln" style="top:654px">供内科临床参考,可见于正常人、体力劳动者、运动员，定期复查<span class="lt">.</span></div>
    <div class="ln" style="top:676px;left:351px">总检日期：<span class="lt">2019-11-22</span></div>
    <div class="ln" style="top:676px;left:538px">总检医生：文集按时</div>
  </div>
  <!-- inner scrollbar -->
  <div class="abs" style="left:1096px;top:0;width:17px;height:693px;background:#f1f1f1"></div>
</div>
<div class="abs" style="left:1882px;top:182px;width:17px;height:693px;background:#f1f1f1">
  <div class="abs" style="left:4px;top:7px;width:0;height:0;border-left:4px solid transparent;border-right:4px solid transparent;border-bottom:4px solid #a3a3a3"></div>
  <div class="abs" style="left:2px;top:17px;width:13px;height:94px;background:#c1c1c1"></div>
  <div class="abs" style="left:4px;top:683px;width:0;height:0;border-left:4px solid transparent;border-right:4px solid transparent;border-top:4px solid #505050"></div>
</div>
<div class="abs" style="left:1882px;top:875px;width:17px;height:5px;background:#fff;border-radius:0 0 3px 0"></div>
<!-- outer page scrollbar -->
<div class="abs" style="left:1904px;top:818px;width:9px;height:59px;background:#c8cacc;border-radius:3px 0 0 0"></div>
<div class="abs" style="left:1907px;top:823px;width:4px;height:50px;background:#bfc1c3"></div>
<div class="abs" style="left:1907px;top:853px;width:4px;height:20px;background:repeating-linear-gradient(#a8dcef 0 1px,#bfc1c3 1px 2px)"></div>
<div class="abs" style="left:1904px;top:877px;width:8px;height:16px;background:#5f5f5f;border-radius:4px 4px 0 0"></div>

</body></html>
